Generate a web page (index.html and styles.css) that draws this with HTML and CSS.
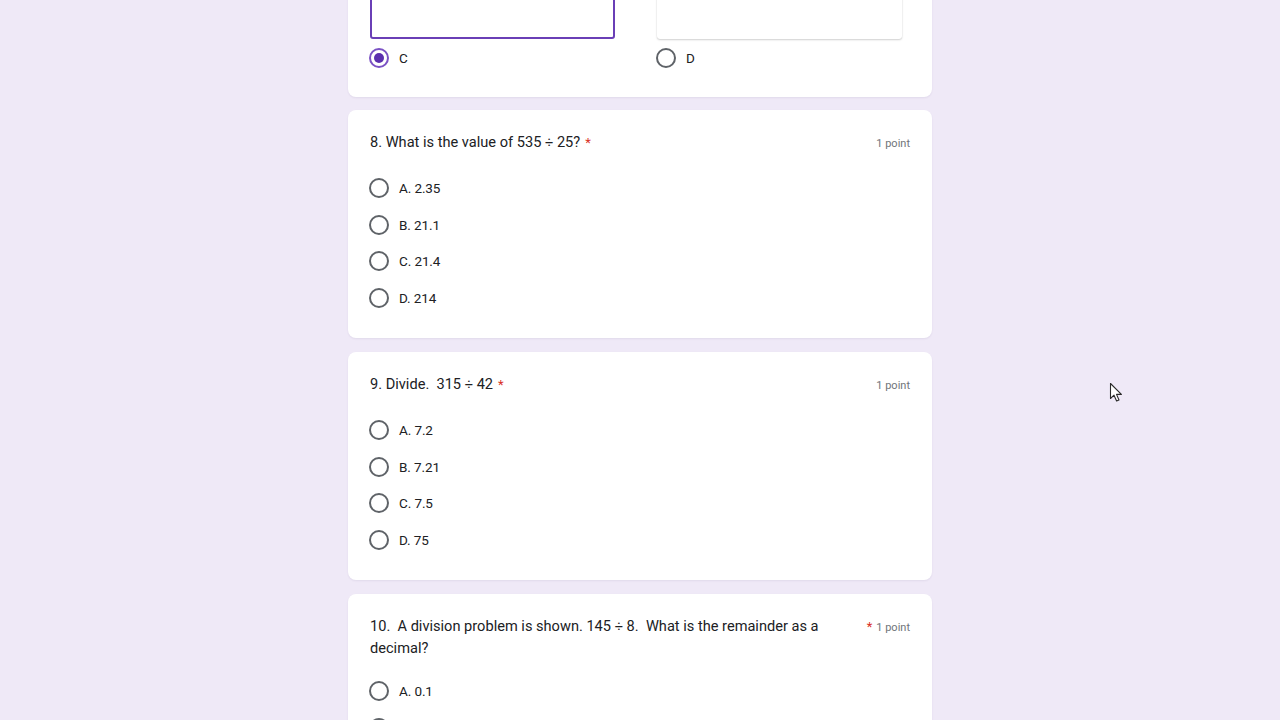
FILE: index.html
```html
<!DOCTYPE html>
<html lang="en">
<head>
<meta charset="utf-8">
<title>Quiz</title>
<link rel="stylesheet" href="styles.css">
</head>
<body>
<main class="form">
  <section class="card card-images">
    <div class="image-grid">
      <div class="image-choice">
        <div class="image-box image-box-selected"></div>
        <label class="option"><span class="radio radio-checked"></span><span class="option-text">C</span></label>
      </div>
      <div class="image-choice">
        <div class="image-box"></div>
        <label class="option"><span class="radio"></span><span class="option-text">D</span></label>
      </div>
    </div>
  </section>

  <section class="card">
    <div class="q-header">
      <span class="q-title">8. What is the value of 535 ÷ 25?</span>
      <span class="req">*</span>
      <span class="points">1 point</span>
    </div>
    <div class="options">
      <label class="option"><span class="radio"></span><span class="option-text">A. 2.35</span></label>
      <label class="option"><span class="radio"></span><span class="option-text">B. 21.1</span></label>
      <label class="option"><span class="radio"></span><span class="option-text">C. 21.4</span></label>
      <label class="option"><span class="radio"></span><span class="option-text">D. 214</span></label>
    </div>
  </section>

  <section class="card">
    <div class="q-header">
      <span class="q-title">9. Divide.&nbsp; 315 ÷ 42</span>
      <span class="req">*</span>
      <span class="points">1 point</span>
    </div>
    <div class="options">
      <label class="option"><span class="radio"></span><span class="option-text">A. 7.2</span></label>
      <label class="option"><span class="radio"></span><span class="option-text">B. 7.21</span></label>
      <label class="option"><span class="radio"></span><span class="option-text">C. 7.5</span></label>
      <label class="option"><span class="radio"></span><span class="option-text">D. 75</span></label>
    </div>
  </section>

  <section class="card">
    <div class="q-header q-header-wrap">
      <span class="q-title q-title-wrap">10.&nbsp; A division problem is shown. 145 ÷ 8.&nbsp; What is the remainder as a decimal?</span>
      <span class="req req-end">*</span>
      <span class="points">1 point</span>
    </div>
    <div class="options">
      <label class="option"><span class="radio"></span><span class="option-text">A. 0.1</span></label>
      <label class="option"><span class="radio"></span><span class="option-text">B. 0.125</span></label>
    </div>
  </section>
</main>

<svg class="cursor" width="16" height="22" viewBox="0 0 16 22" aria-hidden="true">
  <path d="M1.5 1.5 L1.5 16.5 L5 13.2 L7.6 19 L10 18 L7.5 12.4 L12.4 12.4 Z" fill="#ffffff" stroke="#2b2b2b" stroke-width="1.1" stroke-linejoin="round"/>
</svg>
</body>
</html>
```

FILE: styles.css
```css
html, body {
  margin: 0;
  padding: 0;
  height: 100%;
  overflow: hidden;
}

body {
  background: #efe9f7;
  font-family: Roboto, "Noto Sans", Arial, sans-serif;
  color: #202124;
}

.form {
  width: 584px;
  margin: -70px auto 0;
  display: flex;
  flex-direction: column;
  gap: 14px;
}

.card {
  background: #ffffff;
  border-radius: 8px;
  box-shadow: 0 1px 2px rgba(60, 40, 100, 0.08);
  padding: 21px 22px 30px;
}

.card-images {
  padding: 24px 22px 29px;
  margin-bottom: -1px;
}

.image-grid {
  display: flex;
  gap: 42px;
}

.image-choice {
  width: 245px;
  display: flex;
  flex-direction: column;
  gap: 10px;
}

.image-box {
  height: 85px;
  border-radius: 3px;
  background: #ffffff;
  box-shadow: 0 1px 2px rgba(0, 0, 0, 0.18), 0 0 1px rgba(0, 0, 0, 0.12);
}

.image-box-selected {
  box-shadow: none;
  border: 2px solid #6a3fb6;
  height: 81px;
}

.image-choice .option {
  margin-top: -1px;
}

.q-header {
  display: flex;
  align-items: baseline;
  font-size: 14.6px;
  line-height: 22px;
  margin-bottom: 25px;
}

.q-header-wrap {
  margin-bottom: 22px;
}

.q-title-wrap {
  max-width: 470px;
}

.req {
  color: #d93025;
  margin-left: 5px;
  font-size: 13px;
  line-height: 16px;
}

.req-end {
  margin-left: auto;
  margin-right: 4px;
}

.req-end + .points {
  margin-left: 0;
}

.points {
  margin-left: auto;
  font-size: 11px;
  color: #70757a;
  line-height: 16px;
}

.options {
  display: flex;
  flex-direction: column;
  gap: 16.7px;
}

.option {
  display: flex;
  align-items: center;
  gap: 10px;
  height: 20px;
  font-size: 13.5px;
  color: #202124;
}

.radio {
  box-sizing: border-box;
  width: 20px;
  height: 20px;
  margin-left: -1px;
  border-radius: 50%;
  border: 2px solid #5f6368;
  display: flex;
  align-items: center;
  justify-content: center;
  flex: none;
}

.radio-checked {
  border-color: #7b52c4;
}

.radio-checked::after {
  content: "";
  width: 10px;
  height: 10px;
  border-radius: 50%;
  background: #5b2fae;
}

.option-text {
  letter-spacing: -0.1px;
}

.cursor {
  position: absolute;
  left: 1109px;
  top: 382px;
}
```
